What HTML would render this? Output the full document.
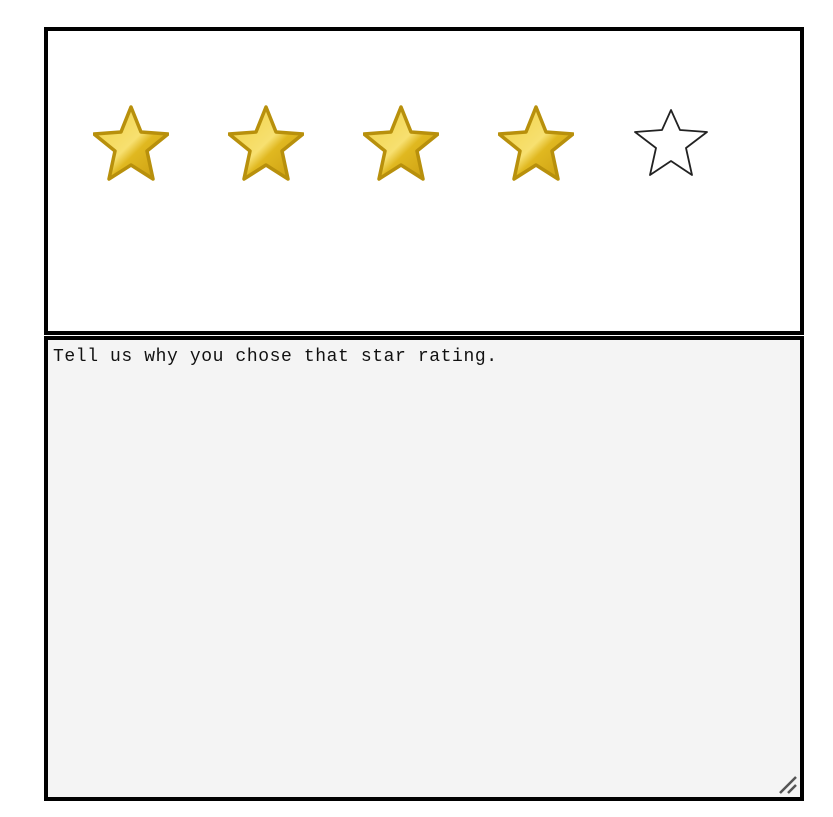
<!DOCTYPE html>
<html><head><style>
body{margin:0;width:833px;height:817px;background:#fff;position:relative;overflow:hidden}
.top{position:absolute;left:44px;top:27px;width:752px;height:300px;border:4px solid #000;background:#fff}
.bot{position:absolute;left:44px;top:336px;width:752px;height:457px;border:4px solid #000;background:#f4f4f4}
.txt{position:absolute;left:5px;top:7px;font-family:"Liberation Mono",monospace;font-size:18px;letter-spacing:0.6px;color:#111;white-space:pre}
svg.s{position:absolute}
</style></head><body>
<div class="top"></div>
<svg width="0" height="0" style="position:absolute"><defs>
<linearGradient id="g" x1="0" y1="0" x2="1" y2="1"><stop offset="0" stop-color="#f0d040"/><stop offset="0.5" stop-color="#f7e070"/><stop offset="0.6" stop-color="#e0b820"/><stop offset="1" stop-color="#c89a10"/></linearGradient>
</defs></svg>
<svg class="s" style="left:93px;top:105px" width="76" height="76" viewBox="0 0 76 76"><polygon points="38,2 48,27 75,29 54,46 60,74 38,60 16,74 22,46 1,29 28,27" fill="url(#g)" stroke="#b8900c" stroke-width="3.5" stroke-linejoin="round"/></svg>
<svg class="s" style="left:228px;top:105px" width="76" height="76" viewBox="0 0 76 76"><polygon points="38,2 48,27 75,29 54,46 60,74 38,60 16,74 22,46 1,29 28,27" fill="url(#g)" stroke="#b8900c" stroke-width="3.5" stroke-linejoin="round"/></svg>
<svg class="s" style="left:363px;top:105px" width="76" height="76" viewBox="0 0 76 76"><polygon points="38,2 48,27 75,29 54,46 60,74 38,60 16,74 22,46 1,29 28,27" fill="url(#g)" stroke="#b8900c" stroke-width="3.5" stroke-linejoin="round"/></svg>
<svg class="s" style="left:498px;top:105px" width="76" height="76" viewBox="0 0 76 76"><polygon points="38,2 48,27 75,29 54,46 60,74 38,60 16,74 22,46 1,29 28,27" fill="url(#g)" stroke="#b8900c" stroke-width="3.5" stroke-linejoin="round"/></svg>
<svg class="s" style="left:634px;top:108px" width="76" height="72" viewBox="0 0 76 72"><polygon points="37,2 46,22 73,24 52,40 58,67 37,53 16,67 22,40 1,24 28,22" fill="#fff" stroke="#222" stroke-width="1.8" stroke-linejoin="round"/></svg>
<div class="bot"><div class="txt">Tell us why you chose that star rating.</div>
<svg style="position:absolute;right:2px;bottom:2px" width="22" height="22"><path d="M4 20L20 4M12 20L20 12" stroke="#555" stroke-width="2.5"/></svg></div>
</body></html>
